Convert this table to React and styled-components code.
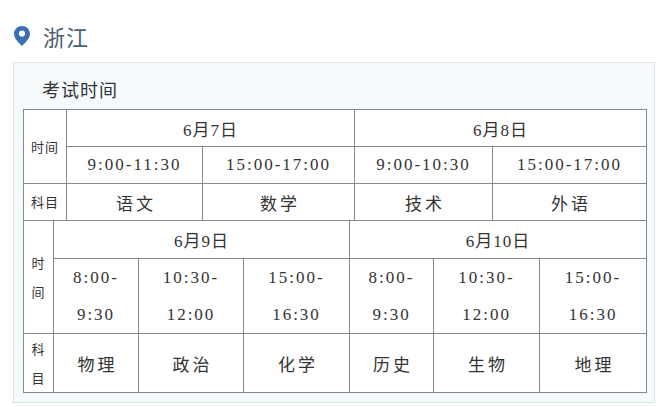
import styled, { createGlobalStyle } from 'styled-components';

const Global = createGlobalStyle`
  body {
    margin: 0;
    background: #fff;
    font-family: "Noto Sans CJK SC", "Noto Sans", sans-serif;
  }
`;

const Page = styled.div`
  width: 664px;
  height: 407px;
  overflow: hidden;
  padding-top: 23px;
  box-sizing: border-box;
`;

const Region = styled.div`
  display: flex;
  align-items: center;
  gap: 13px;
  padding-left: 14px;
  height: 26px;
  color: #4b6275;
  font-size: 22px;
  letter-spacing: 1px;

  svg {
    display: block;
  }
`;

const Panel = styled.div`
  margin: 13px 0 0 13px;
  width: 642px;
  height: 341px;
  box-sizing: border-box;
  background: #f5fafd;
  border: 1px solid #dde4e9;
  padding: 0 9px;
`;

const Title = styled.div`
  padding: 13px 0 0 19px;
  height: 33px;
  font-size: 18px;
  color: #333;
  letter-spacing: 1px;
`;

const Table = styled.table`
  width: 623px;
  border-collapse: collapse;
  table-layout: fixed;
  background: #fff;
  color: #333;
  margin-top: ${p => (p.$joined ? '-1px' : '0')};

  td {
    border: 1px solid #888;
    text-align: center;
    vertical-align: middle;
    padding: 0;
  }
`;

const Row = styled.tr`
  height: ${p => p.$h}px;
`;

const Label = styled.td`
  font-size: 13px;
  line-height: ${p => (p.$stack ? '29px' : '18px')};
  letter-spacing: 1px;
`;

const Stack = styled.div`
  width: 14px;
  margin: 0 auto;
  word-break: break-all;
`;

const Date = styled.td`
  font-family: "Liberation Serif", "Noto Sans CJK SC", serif;
  font-size: 17px;
  letter-spacing: 1px;
`;

const Time = styled.td`
  font-family: "Liberation Serif", serif;
  font-size: 17px;
  letter-spacing: 2px;
  line-height: ${p => (p.$two ? '37px' : '20px')};
`;

const Subject = styled.td`
  font-size: 17px;
  letter-spacing: 3px;
  padding-left: 3px !important;
`;

function Pin() {
  return (
    <svg width="16" height="20" viewBox="0 0 16 20">
      <path
        d="M8 0C3.6 0 0 3.4 0 7.7 0 12.6 5.6 17.6 8 20c2.4-2.4 8-7.4 8-12.3C16 3.4 12.4 0 8 0z"
        fill="#3a70b2"
      />
      <circle cx="8" cy="7.6" r="3.1" fill="#fff" />
    </svg>
  );
}

const day1 = [
  { date: '6月7日', slots: [['9:00-11:30', '语文'], ['15:00-17:00', '数学']] },
  { date: '6月8日', slots: [['9:00-10:30', '技术'], ['15:00-17:00', '外语']] },
];

const day2 = [
  { date: '6月9日', slots: [['8:00-', '9:30', '物理'], ['10:30-', '12:00', '政治'], ['15:00-', '16:30', '化学']] },
  { date: '6月10日', slots: [['8:00-', '9:30', '历史'], ['10:30-', '12:00', '生物'], ['15:00-', '16:30', '地理']] },
];

export default function App() {
  return (
    <Page>
      <Global />
      <Region>
        <Pin />
        <span>浙江</span>
      </Region>
      <Panel>
        <Title>考试时间</Title>
        <Table>
          <colgroup>
            <col style={{ width: 43 }} />
            <col style={{ width: 136 }} />
            <col style={{ width: 152 }} />
            <col style={{ width: 138 }} />
            <col style={{ width: 154 }} />
          </colgroup>
          <tbody>
            <Row $h={37}>
              <Label rowSpan={2}>时间</Label>
              {day1.map(d => (
                <Date key={d.date} colSpan={2}>{d.date}</Date>
              ))}
            </Row>
            <Row $h={37}>
              {day1.flatMap(d => d.slots).map(s => (
                <Time key={s[1]}>{s[0]}</Time>
              ))}
            </Row>
            <Row $h={37}>
              <Label>科目</Label>
              {day1.flatMap(d => d.slots).map(s => (
                <Subject key={s[1]}>{s[1]}</Subject>
              ))}
            </Row>
          </tbody>
        </Table>
        <Table $joined>
          <colgroup>
            <col style={{ width: 30 }} />
            <col style={{ width: 85 }} />
            <col style={{ width: 105 }} />
            <col style={{ width: 106 }} />
            <col style={{ width: 84 }} />
            <col style={{ width: 106 }} />
            <col style={{ width: 107 }} />
          </colgroup>
          <tbody>
            <Row $h={38}>
              <Label rowSpan={2} $stack>
                <Stack>时间</Stack>
              </Label>
              {day2.map(d => (
                <Date key={d.date} colSpan={3}>{d.date}</Date>
              ))}
            </Row>
            <Row $h={74}>
              {day2.flatMap(d => d.slots).map(s => (
                <Time key={s[2]} $two>
                  {s[0]}
                  <br />
                  {s[1]}
                </Time>
              ))}
            </Row>
            <Row $h={58}>
              <Label $stack>
                <Stack>科目</Stack>
              </Label>
              {day2.flatMap(d => d.slots).map(s => (
                <Subject key={s[2]}>{s[2]}</Subject>
              ))}
            </Row>
          </tbody>
        </Table>
      </Panel>
    </Page>
  );
}
